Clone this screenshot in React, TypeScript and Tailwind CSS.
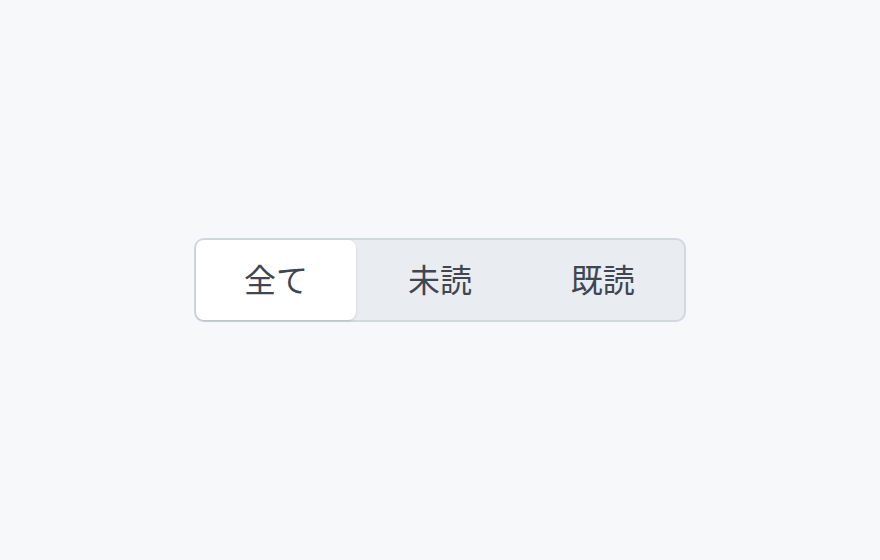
import { useState } from 'react'

const tabs = ['全て', '未読', '既読']

export default function App() {
  const [active, setActive] = useState(0)

  return (
    <div
      className="w-[880px] h-[560px] bg-[#f7f8fa] flex items-center justify-center"
      style={{ fontFamily: '"Noto Sans", "Noto Sans CJK JP", sans-serif' }}
    >
      <div className="w-[492px] h-[84px] grid grid-cols-3 border-2 border-[#d3d7de] rounded-[10px] bg-[#e9ecf1]">
        {tabs.map((label, i) => (
          <button
            key={label}
            onClick={() => setActive(i)}
            className={
              i === active
                ? 'w-[160px] h-full flex items-center justify-center rounded-lg bg-white shadow-sm text-[32px] text-[#3f4652]'
                : 'w-full h-full flex items-center justify-center rounded-lg text-[32px] text-[#3f4652]'
            }
          >
            {label}
          </button>
        ))}
      </div>
    </div>
  )
}
